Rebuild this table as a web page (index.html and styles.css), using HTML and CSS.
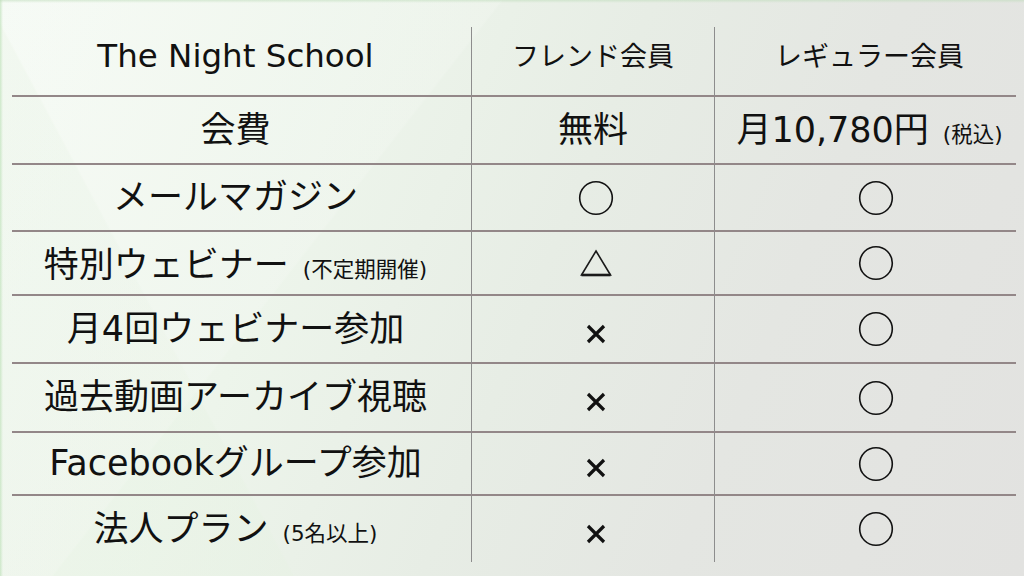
FILE: index.html
```html
<!DOCTYPE html>
<html lang="ja">
<head>
    <meta charset="UTF-8">
    <title>The Night School 会員プラン</title>
    <link rel="stylesheet" href="styles.css">
</head>
<body>
    <div class="slide">
        <div class="plan-table">
            <!-- ヘッダー -->
            <div class="cell label head"><span class="school">The Night School</span></div>
            <div class="cell friend head">フレンド会員</div>
            <div class="cell regular head">レギュラー会員</div>

            <div class="cell label">会費</div>
            <div class="cell friend">無料</div>
            <div class="cell regular">月10,780円<small>(税込)</small></div>

            <div class="cell label">メールマガジン</div>
            <div class="cell friend mark"><svg class="maru" viewBox="0 0 36 36"><circle cx="18" cy="18" r="16.3"/></svg></div>
            <div class="cell regular mark"><svg class="maru" viewBox="0 0 36 36"><circle cx="18" cy="18" r="16.3"/></svg></div>

            <div class="cell label">特別ウェビナー<small>(不定期開催)</small></div>
            <div class="cell friend mark"><svg class="sankaku" viewBox="0 0 32 28"><polygon points="16,2 30.5,26 1.5,26"/><line x1="1.5" y1="26" x2="30.5" y2="26"/></svg></div>
            <div class="cell regular mark"><svg class="maru" viewBox="0 0 36 36"><circle cx="18" cy="18" r="16.3"/></svg></div>

            <div class="cell label">月4回ウェビナー参加</div>
            <div class="cell friend mark"><svg class="batsu" viewBox="0 0 20 20"><path d="M2 2L18 18M18 2L2 18"/></svg></div>
            <div class="cell regular mark"><svg class="maru" viewBox="0 0 36 36"><circle cx="18" cy="18" r="16.3"/></svg></div>

            <div class="cell label">過去動画アーカイブ視聴</div>
            <div class="cell friend mark"><svg class="batsu" viewBox="0 0 20 20"><path d="M2 2L18 18M18 2L2 18"/></svg></div>
            <div class="cell regular mark"><svg class="maru" viewBox="0 0 36 36"><circle cx="18" cy="18" r="16.3"/></svg></div>

            <div class="cell label">Facebookグループ参加</div>
            <div class="cell friend mark"><svg class="batsu" viewBox="0 0 20 20"><path d="M2 2L18 18M18 2L2 18"/></svg></div>
            <div class="cell regular mark"><svg class="maru" viewBox="0 0 36 36"><circle cx="18" cy="18" r="16.3"/></svg></div>

            <div class="cell label last">法人プラン<small>(5名以上)</small></div>
            <div class="cell friend mark last"><svg class="batsu" viewBox="0 0 20 20"><path d="M2 2L18 18M18 2L2 18"/></svg></div>
            <div class="cell regular mark last"><svg class="maru" viewBox="0 0 36 36"><circle cx="18" cy="18" r="16.3"/></svg></div>
        </div>
    </div>
</body>
</html>
```

FILE: styles.css
```css
html, body {
    margin: 0;
    padding: 0;
}

body {
    width: 1024px;
    height: 576px;
    overflow: hidden;
    font-family: "DejaVu Sans", "Noto Sans CJK JP", sans-serif;
    color: #111;
}

.slide {
    width: 1024px;
    height: 576px;
    box-sizing: border-box;
    padding: 27px 8px 0 12px;
    background-color: #e6e9e4;
    background-image:
        linear-gradient(180deg, rgba(190, 220, 186, 0.55) 0, rgba(190, 220, 186, 0) 3px),
        linear-gradient(90deg, rgba(190, 225, 185, 0.7) 0, rgba(190, 225, 185, 0) 3px),
        linear-gradient(128deg, rgba(255, 255, 255, 0.14) 0 34%, rgba(255, 255, 255, 0) 34.2%),
        linear-gradient(62deg, rgba(230, 242, 226, 0.35) 0 22%, rgba(230, 242, 226, 0) 22.2%),
        linear-gradient(112deg, #f5faf4 0%, #edf5eb 30%, #e7ede5 52%, #e4e6e2 72%, #e2e2e0 100%);
}

.plan-table {
    display: grid;
    grid-template-columns: 459px 243px 302px;
    grid-template-rows: 70px 68px 67px 64px 68px 69px 63px 66px;
}

.cell {
    display: flex;
    align-items: center;
    justify-content: center;
    box-sizing: border-box;
    border-bottom: 2px solid #938788;
    font-size: 35px;
    white-space: nowrap;
    line-height: 1;
}

.cell.last {
    border-bottom: none;
}

.label {
    padding-right: 12px;
}

.friend,
.regular {
    border-left: 1px solid #8d8d8d;
}

.regular {
    padding-left: 8px;
}

.cell.head {
    font-size: 27px;
    padding-bottom: 10px;
}

.school {
    font-size: 32.5px;
}

/* 注記（小さい括弧書き） */
.cell:has(small) {
    align-items: baseline;
    padding-top: 16px;
}

small {
    font-size: 21.5px;
    margin-left: 14px;
}

.friend.mark {
    padding-left: 5px;
}

.regular.mark {
    padding-left: 20px;
}

.maru {
    width: 36px;
    height: 36px;
    fill: none;
    stroke: #111;
    stroke-width: 1.6;
}

.sankaku {
    width: 32px;
    height: 28px;
    fill: none;
    stroke: #1a1a1a;
    stroke-width: 1.6;
}

.sankaku line {
    stroke-width: 2.6;
}

.batsu {
    width: 20px;
    height: 20px;
    margin-top: 9px;
    fill: none;
    stroke: #111;
    stroke-width: 3.2;
}
```
